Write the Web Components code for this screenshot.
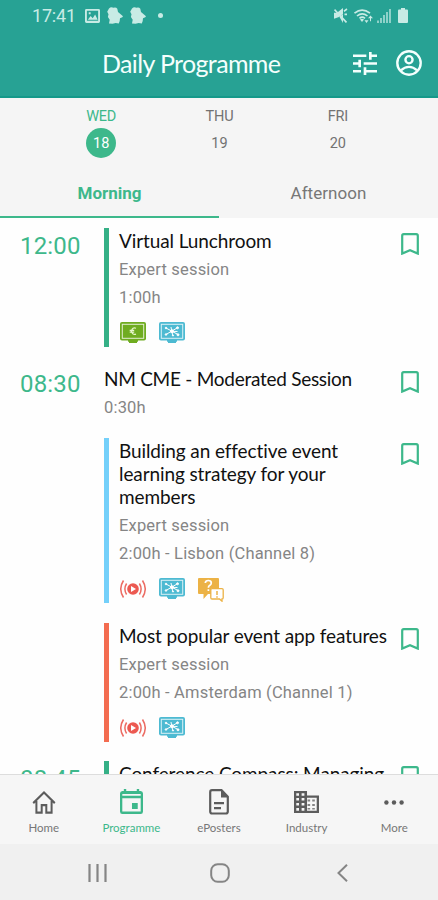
<!DOCTYPE html>
<html lang="en">
<head>
<meta charset="utf-8">
<meta name="viewport" content="width=device-width, initial-scale=1">
<title>Daily Programme</title>
<style>
  body {
    margin: 0;
    height: 900px;
    overflow: hidden;
    background: #fefefe;
    font-family: Roboto, "Liberation Sans", sans-serif;
    --heading: Lato, "Open Sans", sans-serif;
    --green: #3db88b;
  }
</style>
</head>
<body>
<programme-app>
  <status-bar slot="top" time="17:41"></status-bar>
  <app-header slot="top">Daily Programme</app-header>
  <day-picker slot="top">
    <day-item day="WED" date="18" selected></day-item>
    <day-item day="THU" date="19"></day-item>
    <day-item day="FRI" date="20"></day-item>
  </day-picker>
  <part-tabs slot="top">
    <part-tab selected>Morning</part-tab>
    <part-tab>Afternoon</part-tab>
  </part-tabs>

  <time-slot time="12:00">
    <session-card color="#35b086" kind="Expert session" info="1:00h" icons="euro,network">Virtual Lunchroom</session-card>
  </time-slot>
  <time-slot time="08:30">
    <session-card plain info="0:30h">NM CME - Moderated Session</session-card>
    <session-card color="#74d0fa" kind="Expert session" info="2:00h - Lisbon (Channel 8)" icons="live,network,question">Building an effective event learning strategy for your members</session-card>
    <session-card color="#f36c50" kind="Expert session" info="2:00h - Amsterdam (Channel 1)" icons="live,network">Most popular event app features</session-card>
  </time-slot>
  <time-slot time="08:45">
    <session-card color="#35b086">Conference Compass: Managing</session-card>
  </time-slot>

  <nav-bar slot="bottom">
    <nav-item icon="home">Home</nav-item>
    <nav-item icon="calendar" selected>Programme</nav-item>
    <nav-item icon="document">ePosters</nav-item>
    <nav-item icon="building">Industry</nav-item>
    <nav-item icon="more">More</nav-item>
  </nav-bar>
  <system-bar slot="bottom"></system-bar>
</programme-app>

<script>
(function (customElements) {

  const MONITOR = (color) => `
    <rect x="0" y="0" width="26" height="18.500" rx="2" fill="${color}"/>
    <rect x="2.300" y="2.300" width="21.400" height="14" fill="none" stroke="#fff" stroke-opacity=".8" stroke-width="1"/>
    <path d="M8 18h10v1.500l-1 .5v1H9v-1l-1-.5z" fill="${color}"/>`;

  // viewBox and content of every icon, keyed by name
  const ICONS = {
    picture: ['0 0 16 15', '<path fill="currentColor" fill-rule="evenodd" d="M1.500 0h13Q16 0 16 1.500v12Q16 15 14.500 15h-13Q0 15 0 13.500v-12Q0 0 1.500 0zM2 2v10.500h12V2zM3 11.500l3-4 2.200 2.300 2.600-4 2.700 5.700zM4 3.500h2v2H4z"/>'],
    puzzle: ['0 0 16 16', '<path fill="currentColor" d="M2 1.500Q4-.8 6.500.8 9 0 10.300 1.700l.7 3 1.800 1.500 3.200 2.600q0 1-3 1.800 0 3-1.200 4.900l-3.100-.5-3.200.8L2 15.500l.7-3.500L.9 9.500l.6-2.700L.2 4.500z"/>'],
    mute: ['0 0 14 14', '<path fill="currentColor" d="M0 4.500h3L9 0v5.500L5 8.500 0 10z"/><path fill="currentColor" d="M5.500 8.500L9 5.500V14z"/><path d="M.5 1.500l12 12M10 3l3-2M10.500 6H13" stroke="currentColor" stroke-width="1.600"/>'],
    wifi: ['0 0 19 15', '<g fill="none" stroke="currentColor" stroke-width="1.700"><path d="M.5 4.500Q8-2 16 4.500M3 7.500Q8.200 3 13.500 7.500M5.500 10Q8.200 7.500 11 10"/></g><path fill="currentColor" d="M8 14L6 11.200q2-1.500 4 0zM10.500 12h4l-2 3zM14 10h5l-2.500-3zM16 10h1v3h-1z"/>'],
    signal: ['0 0 14 14', '<path fill="currentColor" opacity=".65" d="M0 11.500h2V14H0zM3 9h2v5H3zM6 6h2v8H6zM9 3h2v11H9zM12 0h2v14h-2z"/>'],
    battery: ['0 0 10 14', '<path fill="currentColor" d="M3 0h4v1.500h2q1 0 1 1V13q0 1-1 1H1q-1 0-1-1V2.500q0-1 1-1h2z"/>'],
    tune: ['3 3 18 18', '<path fill="currentColor" d="M3 17v2h6v-2H3zM3 5v2h10V5H3zm10 16v-2h8v-2h-8v-2h-2v6h2zM7 9v2H3v2h4v2h2V9H7zm14 4v-2H11v2h10zm-6-4h2V7h4V5h-4V3h-2v6z"/>'],
    account: ['0 0 24 24', '<g fill="none" stroke="currentColor" stroke-width="2.200"><circle cx="12" cy="12" r="10.800"/><circle cx="12" cy="9" r="3.300"/><path d="M4.500 18.900Q8 15.600 12 15.600t7.500 3.300"/></g>'],
    bookmark: ['0 0 18 22', '<path d="M1.200 20.600V2.700q0-1.500 1.500-1.500h12.600q1.500 0 1.500 1.500v17.900L9 17.300z" fill="none" stroke="currentColor" stroke-width="2.200"/>'],
    euro: ['0 0 26 22', MONITOR('#6fac20') + '<path d="M16 6.300q-3.600-1.400-4.600 2.900 1 4.300 4.600 2.900M9.700 8.400h4.500M9.700 10.200h4.500" fill="none" stroke="#e8f6cc" stroke-width="1.200"/>'],
    network: ['0 0 26 22', MONITOR('#4dbad2') + '<g stroke="#fff" stroke-width="1" fill="#fff"><path d="M7 6l12 6.500M7 12.500L18 6M12.800 9.300l5.700.2M12.800 9.300l1 4.200M12.800 9.300L12 5"/><circle cx="13" cy="9.300" r="1.500"/><circle cx="7" cy="6" r=".8"/><circle cx="7" cy="12.500" r=".8"/><circle cx="18.500" cy="5.800" r="1"/><circle cx="19" cy="12.800" r="1"/><circle cx="14" cy="13.500" r=".6"/></g>'],
    live: ['0 0 26 22', '<circle cx="13" cy="11" r="5.800" fill="#ec5951"/><path d="M11 8l5 3-5 3z" fill="#fff"/><g fill="none" stroke="#ec6b62" stroke-width="1.500"><path d="M6.600 5.500q-3.400 5.500 0 11M19.400 5.500q3.400 5.500 0 11M3.500 2.500q-5.500 8.500 0 17M22.500 2.500q5.500 8.500 0 17"/></g>'],
    question: ['0 0 26 24', '<path d="M1 0h19q1 0 1 1v14q0 1-1 1H10l-4.500 5v-5H1q-1 0-1-1V1q0-1 1-1z" fill="#ecb245"/><path d="M7.300 5q.2-2.500 3-2.500 3 0 3 2.400 0 1.500-1.700 2.500-1.200.8-1.200 2.300M10.400 11.200v1.800" fill="none" stroke="#fff" stroke-width="1.700"/><path d="M14 10.600h10q1.200 0 1.200 1.200v8q0 1.200-1.200 1.200v2.200L21.500 21H14q-1.200 0-1.200-1.200v-8q0-1.200 1.200-1.200z" fill="#fff" stroke="#ecb245" stroke-width="1.300"/><path d="M19 13v4M19 18.200v1.500" stroke="#ecb245" stroke-width="1.500"/>'],
    home: ['0 0 24 24', '<path d="M1.200 12.600L12 2.300l10.800 10.300M4.400 10.500v11.200h5.300v-7.200h4.600v7.200h5.300V10.500" fill="none" stroke="currentColor" stroke-width="2"/>'],
    calendar: ['0 0 24 26', '<path fill="currentColor" fill-rule="evenodd" d="M4 0h2.500v2h11V0H20v2h1.500Q24 2 24 4.500v18q0 2.500-2.500 2.500h-19Q0 25 0 22.500v-18Q0 2 2.500 2H4zM2.400 5v1.800h19.200V5zM2.400 9.200v13.400h19.200V9.200zM12.500 14h6v6h-6z"/>'],
    document: ['0 0 20 26', '<path d="M3 1.200h9.500l6.300 6.500V22.500q0 2-2 2H3.200q-2 0-2-2V3.200q0-2 1.800-2z" fill="none" stroke="currentColor" stroke-width="2.200"/><path d="M12 1v7.500h7.500zM5 13h10v2.200H5zM5 18h7v2.200H5z" fill="currentColor"/>'],
    building: ['0 0 24 22', '<path fill="currentColor" fill-rule="evenodd" d="M0 0h12.500v4.500H24V22H0zM2.200 2.200v2.600h2.600V2.200zM7.300 2.200v2.600H10V2.200zM2.200 7v2.600h2.600V7zM7.300 7v2.600H10V7zM2.200 12v2.600h2.600V12zM7.300 12v2.600H10V12zM2.200 17v2.800h2.600V17zM7.300 17v2.800H10V17zM12.500 6.700v13.100h9.300V6.700z"/><path d="M13 8.500h2.500v2H13zM17.500 8.500H20v2h-2.500zM13 13h2.500v2H13zM17.500 13H20v2h-2.500zM13 17h2.500v1.500H13zM17.500 17H20v1.500h-2.500z" fill="currentColor" opacity=".75"/>'],
    more: ['0 0 20 5', '<g fill="currentColor"><circle cx="2.400" cy="2.500" r="2.200"/><circle cx="10" cy="2.500" r="2.200"/><circle cx="17.600" cy="2.500" r="2.200"/></g>'],
    recents: ['0 0 19 18', '<path d="M1.500 0v18M9.500 0v18M17.500 0v18" stroke="currentColor" stroke-width="2.200"/>'],
    circle: ['0 0 20 20', '<rect x="1.200" y="1.200" width="17.600" height="17.600" rx="6.500" fill="none" stroke="currentColor" stroke-width="2"/>'],
    back: ['0 0 11 18', '<path d="M10 .8L1.500 9l8.500 8.200" fill="none" stroke="currentColor" stroke-width="2"/>']
  };

  const define = (name, render) => {
    customElements.define(name, class extends HTMLElement {
      constructor() {
        super();
        this.attachShadow({ mode: 'open' });
      }

      connectedCallback() {
        const template = document.createElement('template');
        template.innerHTML = render(this);
        this.shadowRoot.replaceChildren(template.content.cloneNode(true));
      }
    });
  };

  // width and height come from the attributes w and h
  define('app-icon', (el) => {
    const [box, content] = ICONS[el.getAttribute('name')];
    return `
      <style>
        :host { display: block; flex: none; width: ${el.getAttribute('w')}px; height: ${el.getAttribute('h')}px; }
        svg { display: block; width: 100%; height: 100%; }
      </style>
      <svg viewBox="${box}" preserveAspectRatio="none">${content}</svg>`;
  });

  define('programme-app', () => `
    <style>
      :host { display: flex; flex-direction: column; height: 900px; }
      main { flex: 1; min-height: 0; overflow: hidden; padding-top: 10px; box-sizing: border-box; }
    </style>
    <slot name="top"></slot>
    <main><slot></slot></main>
    <slot name="bottom"></slot>`);

  define('status-bar', (el) => `
    <style>
      :host { display: flex; justify-content: space-between; flex: none; height: 31px; box-sizing: border-box; padding: 0 30px 0 32px; background: #27a294; color: #c8ebe5; }
      div { display: flex; align-items: center; }
      span { width: 46px; font-size: 18px; line-height: 30px; letter-spacing: -.2px; }
      .left { gap: 7px; }
      .right { gap: 6px; }
      .wifi { margin-right: -2px; }
      .right app-icon:last-child { margin-left: 1px; }
      i { width: 5px; height: 5px; margin-left: 5px; border-radius: 50%; background: currentColor; }
    </style>
    <div class="left">
      <span>${el.getAttribute('time')}</span>
      <app-icon name="picture" w="15" h="14"></app-icon>
      <app-icon name="puzzle" w="16" h="17"></app-icon>
      <app-icon name="puzzle" w="16" h="17"></app-icon>
      <i></i>
    </div>
    <div class="right">
      <app-icon name="mute" w="14" h="15"></app-icon>
      <app-icon class="wifi" name="wifi" w="19" h="14"></app-icon>
      <app-icon name="signal" w="14" h="14"></app-icon>
      <app-icon name="battery" w="10" h="15"></app-icon>
    </div>`);

  define('app-header', () => `
    <style>
      :host { display: flex; align-items: center; flex: none; height: 67px; box-sizing: border-box; padding: 0 16px 1px 102px; background: #27a294; color: #f4fffd; border-bottom: 2px solid #15998a; }
      h1 { flex: 1; margin: 0; font: 400 25px/34px var(--heading); letter-spacing: -.63px; white-space: nowrap; }
      div { display: flex; align-items: center; gap: 19px; }
    </style>
    <h1><slot></slot></h1>
    <div>
      <app-icon name="tune" w="24" h="23"></app-icon>
      <app-icon name="account" w="26" h="26"></app-icon>
    </div>`);

  define('day-picker', () => `
    <style>
      :host { display: grid; grid-template-columns: repeat(3, 1fr); flex: none; height: 72px; padding: 0 41px 0 42px; background: #f5f5f5; }
    </style>
    <slot></slot>`);

  define('day-item', (el) => `
    <style>
      :host { display: flex; flex-direction: column; align-items: center; padding-top: 8px; color: #727272; font-size: 14.500px; }
      :host([selected]) { color: var(--green); }
      .day { line-height: 21px; letter-spacing: -.2px; }
      .date { box-sizing: border-box; width: 30px; height: 30px; padding-top: 2px; line-height: 28px; margin-top: 1px; border-radius: 50%; text-align: center; }
      :host([selected]) .date { background: var(--green); color: #fff; }
    </style>
    <span class="day">${el.getAttribute('day')}</span>
    <span class="date">${el.getAttribute('date')}</span>`);

  define('part-tabs', () => `
    <style>
      :host { display: grid; grid-template-columns: 1fr 1fr; flex: none; height: 48px; background: #f5f5f5; }
    </style>
    <slot></slot>`);

  define('part-tab', () => `
    <style>
      :host { display: block; text-align: center; color: #777; font-size: 17px; line-height: 46px; letter-spacing: .05px; }
      :host([selected]) { color: var(--green); font-weight: 700; letter-spacing: 0; border-bottom: 2px solid var(--green); }
    </style>
    <slot></slot>`);

  define('time-slot', (el) => `
    <style>
      :host { display: grid; grid-template-columns: 104px 1fr; margin-bottom: 19px; }
      time { padding: 2px 0 0 20px; color: var(--green); font-size: 24px; line-height: 32px; letter-spacing: .15px; }
      .sessions { display: flex; flex-direction: column; gap: 20px; }
    </style>
    <time>${el.getAttribute('time')}</time>
    <div class="sessions"><slot></slot></div>`);

  define('session-card', (el) => {
    const icons = (el.getAttribute('icons') || '').split(',').filter(Boolean);
    const kind = el.getAttribute('kind');
    const info = el.getAttribute('info');
    return `
      <style>
        :host { display: flex; align-items: flex-start; box-sizing: border-box; padding: 1px 19px 1px 10px; border-left: 5px solid ${el.getAttribute('color')}; }
        :host([plain]) { padding: 1px 19px 0 0; border-left: 0; height: 52px; }
        .text { flex: 1; min-width: 0; }
        h2 { width: 272px; margin: 0; color: #111; font: 400 19px/23px var(--heading); letter-spacing: -.1px; }
        :host([plain]) h2 { letter-spacing: -.27px; }
        p { margin: 0; color: #858585; font-size: 16.500px; line-height: 28px; letter-spacing: .18px; white-space: nowrap; }
        h2 + p { margin-top: 4px; }
        .icons { display: flex; gap: 13px; height: 24px; margin: 10px 0 0 1px; }
        .mark { color: var(--green); margin-top: 4px; }
      </style>
      <div class="text">
        <h2><slot></slot></h2>
        ${kind ? `<p>${kind}</p>` : ''}
        ${info ? `<p>${info}</p>` : ''}
        ${icons.length ? `<div class="icons">${icons.map((name) => `<app-icon name="${name}" w="26" h="${name === 'question' ? 24 : 22}"></app-icon>`).join('')}</div>` : ''}
      </div>
      <app-icon class="mark" name="bookmark" w="18" h="22"></app-icon>`;
  });

  define('nav-bar', () => `
    <style>
      :host { display: grid; grid-template-columns: repeat(5, 1fr); flex: none; height: 70px; box-sizing: border-box; background: #f6f6f6; border-top: 1px solid #ddd; }
    </style>
    <slot></slot>`);

  const NAV_SIZES = { home: [24, 25], calendar: [23, 26], document: [20, 26], building: [25, 22], more: [20, 5] };

  define('nav-item', (el) => {
    const icon = el.getAttribute('icon');
    const [w, h] = NAV_SIZES[icon];
    return `
      <style>
        :host { display: flex; flex-direction: column; align-items: center; padding-top: 13px; color: #777; font: 400 11.500px/16px var(--heading); }
        :host([selected]) { color: var(--green); }
        .icon { display: flex; align-items: center; height: 28px; color: #5c5c5c; }
        :host([selected]) .icon { color: var(--green); }
        span { margin-top: 4px; }
      </style>
      <div class="icon"><app-icon name="${icon}" w="${w}" h="${h}"></app-icon></div>
      <span><slot></slot></span>`;
  });

  define('system-bar', () => `
    <style>
      :host { display: flex; align-items: center; justify-content: space-between; flex: none; height: 56px; box-sizing: border-box; padding: 1px 90px 0 88px; background: #f0f0f0; color: #858585; }
      .home { margin-right: 4px; }
    </style>
    <app-icon name="recents" w="19" h="18"></app-icon>
    <app-icon class="home" name="circle" w="20" h="20"></app-icon>
    <app-icon name="back" w="11" h="18"></app-icon>`);

})(window.customElements);
</script>
</body>
</html>
